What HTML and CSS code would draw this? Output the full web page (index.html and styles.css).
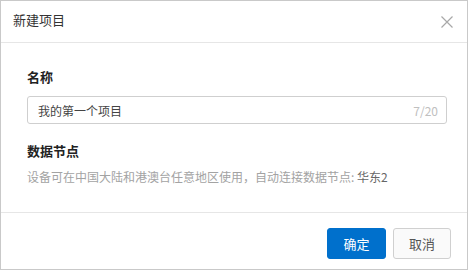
FILE: index.html
```html
<!DOCTYPE html>
<html lang="zh-CN">
<head>
  <meta charset="UTF-8">
  <title>新建项目</title>
  <link rel="stylesheet" href="styles.css">
</head>
<body>

<div class="dialog">
  <div class="dialog-header">
    <span class="dialog-title">新建项目</span>
    <span class="dialog-close">
      <svg width="12" height="12" viewBox="0 0 12 12">
        <path d="M0.5 0.5 L11.5 11.5 M11.5 0.5 L0.5 11.5" stroke="#a8a8a8" stroke-width="1.2" fill="none"/>
      </svg>
    </span>
  </div>

  <div class="dialog-body">
    <div class="field-label">名称</div>
    <div class="text-input">
      <span class="input-value">我的第一个项目</span>
      <span class="input-count">7/20</span>
    </div>

    <div class="field-label field-label-second">数据节点</div>
    <div class="field-desc">设备可在中国大陆和港澳台任意地区使用，自动连接数据节点: <span class="region">华东2</span></div>
  </div>

  <div class="dialog-footer">
    <button class="btn btn-primary">确定</button>
    <button class="btn btn-default">取消</button>
  </div>
</div>

</body>
</html>
```

FILE: styles.css
```css
body {
  margin: 0;
  font-family: "Noto Sans CJK SC", "Liberation Sans", sans-serif;
  background: #fff;
  color: #333;
}

.dialog {
  width: 468px;
  height: 270px;
  box-sizing: border-box;
  border: 1px solid #c9c9c9;
  background: #fff;
  display: flex;
  flex-direction: column;
}

.dialog-header {
  height: 42px;
  border-bottom: 1px solid #e6e6e6;
  display: flex;
  align-items: center;
  justify-content: space-between;
  padding: 0 14px 4px 12px;
  box-sizing: border-box;
}

.dialog-title {
  font-size: 13px;
  color: #333;
}

.dialog-close {
  display: flex;
  margin-top: 5px;
}

.dialog-body {
  flex: 1;
  padding: 24px 20px 0 26px;
}

.field-label {
  font-size: 13px;
  font-weight: bold;
  line-height: 20px;
  color: #222;
}

.field-label-second {
  margin-top: 17px;
}

.text-input {
  margin-top: 9px;
  height: 28px;
  box-sizing: border-box;
  border: 1px solid #cfcfcf;
  border-radius: 3px;
  display: flex;
  align-items: center;
  justify-content: space-between;
  padding: 0 8px 0 10px;
}

.input-value {
  font-size: 12px;
  color: #444;
}

.input-count {
  font-size: 12px;
  color: #c0c0c0;
}

.field-desc {
  margin-top: 6px;
  font-size: 12px;
  line-height: 20px;
  color: #a3a3a3;
}

.region {
  color: #666;
}

.dialog-footer {
  height: 57px;
  box-sizing: border-box;
  border-top: 1px solid #e6e6e6;
  display: flex;
  justify-content: flex-end;
  gap: 7px;
  padding: 15px 16px 0 0;
}

.btn {
  height: 31px;
  font-family: inherit;
  font-size: 13px;
  border-radius: 3px;
  cursor: pointer;
}

.btn-primary {
  width: 59px;
  background: #0070cc;
  border: 1px solid #0070cc;
  color: #fff;
}

.btn-default {
  width: 58px;
  background: #fafafa;
  border: 1px solid #d0d0d0;
  color: #555;
}
```
